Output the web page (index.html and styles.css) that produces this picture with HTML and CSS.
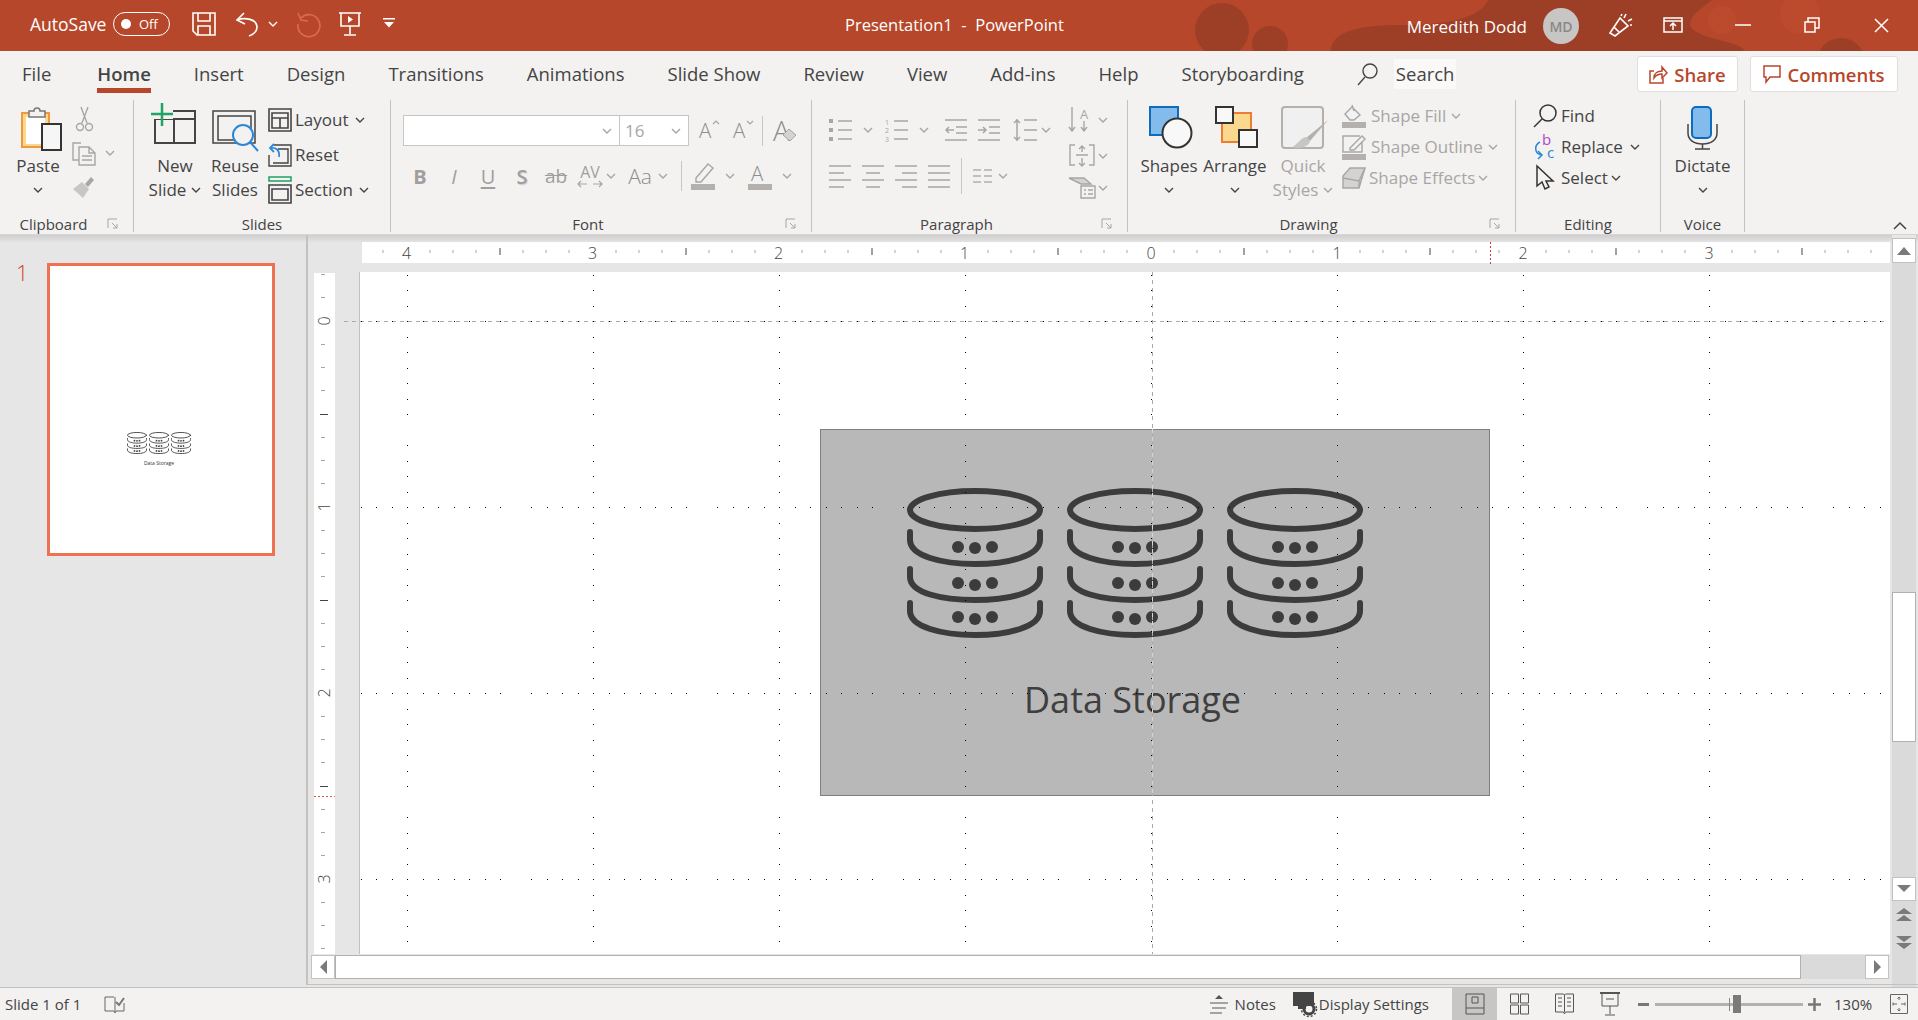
FILE: index.html
```html
<!DOCTYPE html>
<html lang="en">

<head>
    <meta charset="UTF-8">
    <title>Presentation1 - PowerPoint</title>
    <link rel="stylesheet" href="styles.css">
</head>

<body>
    <svg class="defs" width="0" height="0">
        <symbol id="cv" viewBox="0 0 10 6"><path d="M1 1l4 4 4-4" fill="none" stroke="currentColor" stroke-width="1.4"/></symbol>
        <symbol id="lc" viewBox="0 0 12 12"><path d="M1 10V1h9M5 5l5 5M10 6v4H6" fill="none" stroke="#a6a6a6"/></symbol>
        <symbol id="db" viewBox="0 0 136 150">
            <g fill="none" stroke="#3c3c3c" stroke-width="6" stroke-linecap="round">
                <ellipse cx="68" cy="22" rx="65" ry="19"/>
                <path d="M3 44v8c0 16 32 24 65 24s65-8 65-24v-8"/>
                <path d="M3 81v8c0 16 32 23 65 23s65-7 65-23v-8"/>
                <path d="M3 115v8c0 16 32 24 65 24s65-8 65-24v-8"/>
            </g>
            <g fill="#3c3c3c">
                <circle cx="51" cy="59" r="6"/><circle cx="68" cy="60" r="6"/><circle cx="85" cy="59" r="6"/>
                <circle cx="51" cy="95" r="6"/><circle cx="68" cy="97" r="6"/><circle cx="85" cy="95" r="6"/>
                <circle cx="51" cy="129" r="6"/><circle cx="68" cy="131" r="6"/><circle cx="85" cy="129" r="6"/>
            </g>
        </symbol>
    </svg>

    <div class="app">
        <header class="titlebar">
            <svg class="blobs" width="1918" height="51">
                <g fill="#9d3f27">
                    <circle cx="1222" cy="30" r="27"/><circle cx="1270" cy="44" r="18"/>
                    <path d="M1331 51c0-16 19-26 69-26 40 0 80-5 88-25h224c-12 10-22 15-22 25 5 15 50 15 55 26z"/>
                    <circle cx="1841" cy="62" r="24"/>
                </g>
                <g fill="#bc4a2c">
                    <circle cx="1722" cy="20" r="14"/><circle cx="1800" cy="14" r="20"/>
                </g>
            </svg>
            <div class="qat">
                <span class="autosave">AutoSave</span>
                <div class="pill"><i></i><span>Off</span></div>
                <svg class="q-save" width="24" height="24" viewBox="0 0 24 24" fill="none" stroke="#fff" stroke-width="1.6"><path d="M1 1h22v22H5l-4-4z"/><path d="M6 1v8h12V1M6 23v-9h12v9"/></svg>
                <svg class="q-undo" width="23" height="24" viewBox="0 0 23 24" fill="none" stroke="#fff" stroke-width="1.6"><path d="M8 1L1 8l8 4"/><path d="M1 8c8-3 20-1 20 7 0 4-3 7-8 9"/></svg>
                <svg class="cv cv-w"><use href="#cv"/></svg>
                <svg class="q-redo" width="25" height="24" viewBox="0 0 25 24" fill="none" stroke="#dd6a50" stroke-width="1.6"><path d="M4 1l3 7 7 1"/><path d="M7 6a11 11 0 1 1-3 6"/></svg>
                <svg class="q-show" width="22" height="24" viewBox="0 0 22 24" fill="none" stroke="#fff" stroke-width="1.6"><path d="M0 1h22M2 1v13h18V1M11 14v8M5 23h12"/><path d="M9 4l5 3.500-5 3.500z" fill="#fff" stroke="none"/></svg>
                <svg class="q-more" width="12" height="10" viewBox="0 0 12 10" fill="#fff"><path d="M0 0h12v1.500H0zM1 4h10L6 9.500z"/></svg>
            </div>
            <div class="doc-title">Presentation1 &nbsp;-&nbsp; PowerPoint</div>
            <div class="win">
                <span class="user">Meredith Dodd</span>
                <div class="avatar">MD</div>
                <svg class="w-party" width="24" height="24" viewBox="0 0 24 24" fill="none" stroke="#fff" stroke-width="1.600"><path d="M1 20L11 5l8 8-13 10z"/><path d="M5 14l5 5M15 5l2-4M19 8l4-2M21 12h2M12 3l1-2"/></svg>
                <svg class="w-ribbon" width="20" height="16" viewBox="0 0 20 16" fill="none" stroke="#fff" stroke-width="1.500"><path d="M1 1h18v14H1zM1 4h18M10 13V6M7 9l3-3 3 3"/></svg>
                <svg class="w-min" width="16" height="2" viewBox="0 0 16 2"><path d="M0 1h16" stroke="#fff" stroke-width="1.500"/></svg>
                <svg class="w-max" width="16" height="16" viewBox="0 0 16 16" fill="none" stroke="#fff" stroke-width="1.500"><path d="M1 5h10v10H1zM4 5V1h11v10h-4"/></svg>
                <svg class="w-close" width="15" height="15" viewBox="0 0 15 15"><path d="M1 1l13 13M14 1L1 14" stroke="#fff" stroke-width="1.500"/></svg>
            </div>
        </header>

        <nav class="tabs">
            <span class="tab t-file">File</span>
            <span class="tab active">Home</span>
            <span class="tab">Insert</span>
            <span class="tab">Design</span>
            <span class="tab">Transitions</span>
            <span class="tab">Animations</span>
            <span class="tab">Slide Show</span>
            <span class="tab">Review</span>
            <span class="tab">View</span>
            <span class="tab">Add-ins</span>
            <span class="tab">Help</span>
            <span class="tab">Storyboarding</span>
            <svg class="search-ic" width="22" height="24" viewBox="0 0 22 24" fill="none" stroke="#444" stroke-width="1.400"><circle cx="13" cy="9" r="7"/><path d="M8 15l-7 8"/></svg>
            <span class="search">Search</span>
            <div class="tab-btns">
                <div class="tbtn b-share">
                    <svg width="19" height="19" viewBox="0 0 19 19" fill="none" stroke="#b7472a" stroke-width="1.500"><path d="M5 6H1v12h13v-5"/><path d="M5 13c0-5 4-7 8-7V2l5 6-5 5V9c-3 0-6 1-8 4z"/></svg>
                    <span>Share</span>
                </div>
                <div class="tbtn b-comments">
                    <svg width="18" height="18" viewBox="0 0 18 18" fill="none" stroke="#b7472a" stroke-width="1.500"><path d="M1 1h16v11H7l-4 5v-5H1z"/></svg>
                    <span>Comments</span>
                </div>
            </div>
        </nav>

        <section class="ribbon">
            <div class="group g-clip">
                <div class="body b-clip">
                    <div class="big w48">
                        <svg class="ic" width="48" height="55" viewBox="0 0 48 55">
                            <rect x="8" y="13" width="27" height="34" fill="#fcd88e" stroke="#ee9a3c" stroke-width="2"/>
                            <rect x="12" y="17" width="19" height="27" fill="#fff"/>
                            <path d="M15 17v-6h5a3 3 0 0 1 6 0h5v6z" fill="#f3f2f1" stroke="#777" stroke-width="1.500"/>
                            <rect x="28" y="24" width="19" height="26" fill="#f6f6f6" stroke="#333" stroke-width="2"/>
                        </svg>
                        <span>Paste</span>
                        <svg class="cv cv-big"><use href="#cv"/></svg>
                    </div>
                    <div class="col col-s">
                        <div class="row">
                            <svg width="24" height="26" viewBox="0 0 24 26" fill="none" stroke="#a8a6a4" stroke-width="1.400"><path d="M9 1l6 16M16 1l-6 16"/><circle cx="8" cy="21" r="3.500"/><circle cx="17" cy="21" r="3.500"/></svg>
                        </div>
                        <div class="row">
                            <svg width="24" height="26" viewBox="0 0 24 26" fill="none" stroke="#a8a6a4" stroke-width="1.400"><path d="M9 3H1v17h6"/><path d="M7 7h10l6 6v12H7zM17 7v6h6M10 16h10M10 20h10"/></svg>
                            <svg class="cv cv-off ml4"><use href="#cv"/></svg>
                        </div>
                        <div class="row">
                            <svg width="24" height="24" viewBox="0 0 24 24"><path d="M1 14l9-7 7 7-6 9z" fill="#c8c6c4"/><path d="M13 9l6-7 3 3-6 7z" fill="#a8a6a4"/></svg>
                        </div>
                    </div>
                </div>
                <div class="label has-lc"><span>Clipboard</span><svg width="12" height="12"><use href="#lc"/></svg></div>
            </div>

            <div class="group g-slides">
                <div class="body b-slides">
                    <div class="big w58">
                        <svg class="ic" width="58" height="55" viewBox="0 0 58 55">
                            <path d="M9 11h40v32H9zM9 19h40M28 19v24" fill="none" stroke="#444" stroke-width="2"/>
                            <rect x="3" y="10" width="24" height="9" fill="#f3f2f1"/>
                            <path d="M16 3v23M5 14h22" stroke="#21a366" stroke-width="2.500"/>
                        </svg>
                        <span>New</span>
                        <span class="wcv">Slide<svg class="cv"><use href="#cv"/></svg></span>
                    </div>
                    <div class="big w56">
                        <svg class="ic" width="56" height="55" viewBox="0 0 56 55">
                            <path d="M6 43V11h42v32z" fill="none" stroke="#444" stroke-width="1.500"/>
                            <path d="M11 40V16h33v24z" fill="none" stroke="#444" stroke-width="1.500"/>
                            <circle cx="36" cy="35" r="10" fill="#f3f2f1" stroke="#2b88d8" stroke-width="2"/>
                            <path d="M43 42l8 9" stroke="#2b88d8" stroke-width="2"/>
                        </svg>
                        <span>Reuse</span>
                        <span>Slides</span>
                    </div>
                    <div class="col col-sl">
                        <div class="row">
                            <svg width="24" height="24" viewBox="0 0 24 24" fill="none" stroke="#444" stroke-width="1.600"><path d="M1 1h22v22H1zM4 5h16v15H4zM4 10h16M12 10v10"/></svg>
                            <span>Layout</span><svg class="cv"><use href="#cv"/></svg>
                        </div>
                        <div class="row">
                            <svg width="24" height="24" viewBox="0 0 24 24" fill="none" stroke="#444" stroke-width="1.400"><path d="M6 2h17v21H1V12M5 20h15V6H10"/><path d="M6 1L2 5l4 4M2 5c6-1 10 2 9 9" stroke="#2b88d8" stroke-width="1.800"/></svg>
                            <span>Reset</span>
                        </div>
                        <div class="row">
                            <svg width="24" height="28" viewBox="0 0 24 28" fill="none" stroke="#444" stroke-width="1.600"><path d="M1 1h22v4H1z" stroke="#21a366"/><path d="M1 9h22v18H1zM4 13h16v11H4z"/></svg>
                            <span>Section</span><svg class="cv"><use href="#cv"/></svg>
                        </div>
                    </div>
                </div>
                <div class="label"><span>Slides</span></div>
            </div>

            <div class="group g-font">
                <div class="body b-font">
                    <div class="f1">
                        <div class="combo c-name"><svg class="cv cv-off"><use href="#cv"/></svg></div>
                        <div class="combo c-size"><span>16</span><svg class="cv cv-off"><use href="#cv"/></svg></div>
                        <svg class="f-grow" width="21" height="34" viewBox="0 0 21 34"><text x="0" y="23.500" class="big-a">A</text><path d="M14 10l3-3 3 3" fill="none" stroke="#a6a6a6" stroke-width="1.200"/></svg>
                        <svg class="f-shr" width="21" height="34" viewBox="0 0 21 34"><text x="0" y="23.500" class="big-a">A</text><path d="M14 7l3 3 3-3" fill="none" stroke="#a6a6a6" stroke-width="1.200"/></svg>
                        <div class="vsep"></div>
                        <svg class="f-clear" width="24" height="42" viewBox="0 0 24 42"><text x="0" y="30.500" class="big-a bg">A</text><path d="M10 25l6-6 7 6-6 6z" fill="#d5d3d1" stroke="#a6a6a6"/></svg>
                    </div>
                    <div class="f2">
                        <span class="fx b">B</span>
                        <span class="fx i">I</span>
                        <span class="fx u">U</span>
                        <span class="fx s">S</span>
                        <span class="fx ab">ab</span>
                        <span class="fx av">AV<svg width="24" height="8" viewBox="0 0 24 8" fill="none" stroke="#a6a6a6" stroke-width="1.200"><path d="M0 4h9M3 1L0 4l3 3M15 4h9M21 1l3 3-3 3"/></svg></span>
                        <svg class="cv cv-off"><use href="#cv"/></svg>
                        <span class="fx aa">Aa</span>
                        <svg class="cv cv-off"><use href="#cv"/></svg>
                        <div class="vsep v2"></div>
                        <svg class="f-hl" width="24" height="28" viewBox="0 0 24 28"><path d="M5 16L17 2l5 4-12 14H5z" fill="none" stroke="#a6a6a6" stroke-width="1.400"/><path d="M0 22h24v6H0z" fill="#b3b0ad"/></svg>
                        <svg class="cv cv-off ml10"><use href="#cv"/></svg>
                        <svg class="f-col" width="24" height="28" viewBox="0 0 24 28"><text x="3" y="19" class="big-a">A</text><path d="M0 22h24v6H0z" fill="#b3b0ad"/></svg>
                        <svg class="cv cv-off ml10"><use href="#cv"/></svg>
                    </div>
                </div>
                <div class="label has-lc"><span>Font</span><svg width="12" height="12"><use href="#lc"/></svg></div>
            </div>

            <div class="group g-para">
                <div class="body b-para">
                    <div class="p-left">
                        <div class="p1">
                            <svg width="23" height="24" viewBox="0 0 23 24" fill="none" stroke="#a6a6a6" stroke-width="1.500"><path d="M0 1h4v4H0zM0 10h4v4H0zM0 19h4v4H0z" fill="#a6a6a6" stroke="none"/><path d="M9 3h14M9 12h14M9 21h14"/></svg>
                            <svg class="cv cv-off"><use href="#cv"/></svg>
                            <svg class="ml1" width="23" height="24" viewBox="0 0 23 24" fill="none" stroke="#a6a6a6" stroke-width="1.500"><path d="M9 3h14M9 12h14M9 21h14"/><text x="0" y="7" class="tiny">1</text><text x="0" y="15" class="tiny">2</text><text x="0" y="24" class="tiny">3</text></svg>
                            <svg class="cv cv-off"><use href="#cv"/></svg>
                            <svg class="ml5" width="22" height="24" viewBox="0 0 22 24" fill="none" stroke="#a6a6a6" stroke-width="1.500"><path d="M0 2h22M11 9h11M11 15h11M0 22h22M9 12H1M4 9l-3 3 3 3"/></svg>
                            <svg width="22" height="24" viewBox="0 0 22 24" fill="none" stroke="#a6a6a6" stroke-width="1.500"><path d="M0 2h22M11 9h11M11 15h11M0 22h22M0 12h8M5 9l3 3-3 3"/></svg>
                            <svg class="ml2" width="24" height="24" viewBox="0 0 24 24" fill="none" stroke="#a6a6a6" stroke-width="1.500"><path d="M11 2h13M11 12h13M11 22h13M4 1v22M1 5l3-3 3 3M1 19l3 3 3-3"/></svg>
                            <svg class="cv cv-off nm"><use href="#cv"/></svg>
                        </div>
                        <div class="p2">
                            <svg width="22" height="24" viewBox="0 0 22 24" stroke="#a6a6a6" stroke-width="1.500"><path d="M0 2h22M0 9h15M0 16h22M0 23h15"/></svg>
                            <svg width="22" height="24" viewBox="0 0 22 24" stroke="#a6a6a6" stroke-width="1.500"><path d="M0 2h22M4 9h14M0 16h22M4 23h14"/></svg>
                            <svg width="22" height="24" viewBox="0 0 22 24" stroke="#a6a6a6" stroke-width="1.500"><path d="M0 2h22M7 9h15M0 16h22M7 23h15"/></svg>
                            <svg width="22" height="24" viewBox="0 0 22 24" stroke="#a6a6a6" stroke-width="1.500"><path d="M0 2h22M0 9h22M0 16h22M0 23h22"/></svg>
                            <div class="vsep v3"></div>
                            <svg width="19" height="14" viewBox="0 0 19 14" stroke="#b3b0ad" stroke-width="1.400"><path d="M0 1h8M11 1h8M0 7h8M11 7h8M0 13h8M11 13h8"/></svg>
                            <svg class="cv cv-off nm"><use href="#cv"/></svg>
                        </div>
                    </div>
                    <div class="col col-p">
                        <div class="row r-a">
                            <svg width="26" height="26" viewBox="0 0 26 26" fill="none" stroke="#a6a6a6" stroke-width="1.400"><path d="M3 0v24M0 20l3 4 3-4M15 14v10M12 20l3 4 3-4"/><text x="11" y="12" class="tiny t2">A</text></svg>
                            <svg class="cv cv-off"><use href="#cv"/></svg>
                        </div>
                        <div class="row r-b">
                            <svg width="26" height="24" viewBox="0 0 26 24" fill="none" stroke="#a6a6a6" stroke-width="1.400"><path d="M6 1H1v20h5M20 1h5v20h-5M7 11h12M13 2v6M10 5l3-3 3 3M13 14v8M10 19l3 3 3-3"/></svg>
                            <svg class="cv cv-off"><use href="#cv"/></svg>
                        </div>
                        <div class="row r-c">
                            <svg width="26" height="22" viewBox="0 0 26 22" fill="none" stroke="#a6a6a6" stroke-width="1.400"><path d="M0 1h15l7 6H12z" fill="#d5d3d1"/><path d="M12 9h14v12H12zM15 13h2M19 13h5M15 17h2M19 17h5"/></svg>
                            <svg class="cv cv-off"><use href="#cv"/></svg>
                        </div>
                    </div>
                </div>
                <div class="label has-lc"><span>Paragraph</span><svg width="12" height="12"><use href="#lc"/></svg></div>
            </div>

            <div class="group g-draw">
                <div class="body b-draw">
                    <div class="big w66">
                        <svg class="ic" width="66" height="55" viewBox="0 0 66 55">
                            <rect x="14" y="7" width="28" height="28" fill="#83bbec" stroke="#0f6cbd" stroke-width="2"/>
                            <circle cx="41" cy="33" r="14.500" fill="#f8f8f8" stroke="#333" stroke-width="2"/>
                        </svg>
                        <span>Shapes</span>
                        <svg class="cv cv-big"><use href="#cv"/></svg>
                    </div>
                    <div class="big w66">
                        <svg class="ic" width="66" height="55" viewBox="-2 0 66 55">
                            <rect x="18" y="13" width="29" height="29" fill="#fad98f" stroke="#ed7d31" stroke-width="2"/>
                            <rect x="12" y="7" width="17" height="16" fill="#f8f8f8" stroke="#333" stroke-width="2"/>
                            <rect x="35" y="30" width="18" height="17" fill="#f8f8f8" stroke="#333" stroke-width="2"/>
                        </svg>
                        <span>Arrange</span>
                        <svg class="cv cv-big"><use href="#cv"/></svg>
                    </div>
                    <div class="big w66 dis quick">
                        <svg class="ic" width="66" height="55" viewBox="0 0 66 55">
                            <rect x="12" y="7" width="41" height="41" rx="3" fill="#f0f0f0" stroke="#b3b0ad" stroke-width="2"/>
                            <path d="M58 20L40 41l-4-3z" fill="#b3b0ad"/>
                            <path d="M37 37c-5 0-8 5-14 10 6 2 13 1 17-5z" fill="#c8c6c4"/>
                        </svg>
                        <span>Quick</span>
                        <span class="wcv">Styles<svg class="cv cv-off"><use href="#cv"/></svg></span>
                    </div>
                    <div class="col col-d dis">
                        <div class="row">
                            <svg width="24" height="24" viewBox="0 0 24 24" fill="none" stroke="#a6a6a6" stroke-width="1.400"><path d="M3 10l7-7 8 8-6 5H8zM10 1l2 6"/><path d="M0 18h24v6H0z" fill="#b3b0ad" stroke="none"/></svg>
                            <span>Shape Fill</span><svg class="cv cv-off"><use href="#cv"/></svg>
                        </div>
                        <div class="row">
                            <svg width="24" height="26" viewBox="0 0 24 26" fill="none" stroke="#a6a6a6" stroke-width="1.400"><path d="M18 2H1v16h19V8M8 14l12-12 3 3-11 11H8z"/><path d="M0 20h24v6H0z" fill="#b3b0ad" stroke="none"/></svg>
                            <span>Shape Outline</span><svg class="cv cv-off"><use href="#cv"/></svg>
                        </div>
                        <div class="row r-fx">
                            <svg width="24" height="22" viewBox="0 0 24 22" fill="#d5d3d1" stroke="#a6a6a6" stroke-width="1.400"><path d="M8 1h15l-6 20H1V9z"/><path d="M1 11l16 3 6-13M17 14v7" fill="none"/></svg>
                            <span>Shape Effects</span><svg class="cv cv-off"><use href="#cv"/></svg>
                        </div>
                    </div>
                </div>
                <div class="label has-lc"><span>Drawing</span><svg width="12" height="12"><use href="#lc"/></svg></div>
            </div>

            <div class="group g-edit">
                <div class="body b-edit">
                    <div class="col col-e">
                        <div class="row">
                            <svg width="25" height="24" viewBox="0 0 25 24" fill="none" stroke="#333" stroke-width="1.500"><circle cx="15" cy="9" r="8"/><path d="M9 15l-8 8"/></svg>
                            <span>Find</span>
                        </div>
                        <div class="row">
                            <svg width="25" height="26" viewBox="0 0 25 26"><text x="9" y="11" class="rep b1">b</text><text x="14" y="24" class="rep c1">c</text><path d="M7 8C1 11 1 20 9 21M5 17l4 4-4 4" fill="none" stroke="#2b88d8" stroke-width="1.500"/></svg>
                            <span>Replace</span><svg class="cv ml4"><use href="#cv"/></svg>
                        </div>
                        <div class="row">
                            <svg width="25" height="26" viewBox="0 0 25 26" fill="none" stroke="#333" stroke-width="1.500"><path d="M4 1v20l5-4 3 7 4-2-3-6h7z"/></svg>
                            <span>Select</span><svg class="cv"><use href="#cv"/></svg>
                        </div>
                    </div>
                </div>
                <div class="label"><span>Editing</span></div>
            </div>

            <div class="group g-voice">
                <div class="body">
                    <div class="big w83">
                        <svg class="ic" width="83" height="55" viewBox="0 0 83 55">
                            <path d="M27 24v9c0 7 6 11 14.500 11S56 40 56 33v-9M41.500 44v5M34 49h15" fill="none" stroke="#444" stroke-width="1.500"/>
                            <rect x="31" y="7" width="19" height="31" rx="4" fill="#83bbec" stroke="#0f6cbd" stroke-width="2"/>
                        </svg>
                        <span>Dictate</span>
                        <svg class="cv cv-big"><use href="#cv"/></svg>
                    </div>
                </div>
                <div class="label"><span>Voice</span></div>
            </div>

            <svg class="collapse" width="14" height="8" viewBox="0 0 14 8"><path d="M1 7l6-6 6 6" fill="none" stroke="#444" stroke-width="1.500"/></svg>
        </section>

        <main class="work">
            <aside class="thumbs">
                <span class="thumb-no">1</span>
                <div class="thumb">
                    <div class="thumb-icons">
                        <svg width="20" height="22"><use href="#db"/></svg>
                        <svg width="20" height="22"><use href="#db"/></svg>
                        <svg width="20" height="22"><use href="#db"/></svg>
                    </div>
                    <span class="thumb-text">Data Storage</span>
                </div>
            </aside>

            <div class="edit">
                <svg class="hruler" width="1528" height="21" viewBox="0 0 1528 21">
                    <defs>
                        <pattern id="ht" x="44.500" y="0" width="186" height="21" patternUnits="userSpaceOnUse">
                            <path d="M23.250 8v3M46.500 8v3M69.750 8v3M116.250 8v3M139.500 8v3M162.750 8v3" stroke="#a6a6a6" shape-rendering="crispEdges"/>
                            <path d="M93 6v7" stroke="#444" shape-rendering="crispEdges"/>
                        </pattern>
                    </defs>
                    <rect width="1528" height="21" fill="url(#ht)"/>
                    <g class="rnum" text-anchor="middle">
                        <text x="44.500" y="17">4</text><text x="230.500" y="17">3</text><text x="416.500" y="17">2</text><text x="602.500" y="17">1</text>
                        <text x="789" y="17">0</text><text x="975" y="17">1</text><text x="1161" y="17">2</text><text x="1347" y="17">3</text>
                    </g>
                    <path d="M1128.500 0v23" stroke="#d13438" stroke-dasharray="2 2"/>
                </svg>

                <svg class="vruler" width="21" height="681" viewBox="0 0 21 681">
                    <defs>
                        <pattern id="vt" x="0" y="48" width="21" height="186" patternUnits="userSpaceOnUse">
                            <path d="M7 23.250h4M7 46.500h4M7 69.750h4M7 116.250h4M7 139.500h4M7 162.750h4" stroke="#a6a6a6" shape-rendering="crispEdges"/>
                            <path d="M6 93h8" stroke="#444" shape-rendering="crispEdges"/>
                        </pattern>
                    </defs>
                    <rect width="21" height="681" fill="url(#vt)"/>
                    <g class="rnum" text-anchor="middle">
                        <text transform="translate(16 48) rotate(-90)">0</text>
                        <text transform="translate(16 234) rotate(-90)">1</text>
                        <text transform="translate(16 420) rotate(-90)">2</text>
                        <text transform="translate(16 606) rotate(-90)">3</text>
                    </g>
                    <path d="M0 523.500h21" stroke="#e8573a" stroke-dasharray="2 2"/>
                </svg>

                <div class="canvas">
                    <div class="slide">
                        <div class="slide-icons">
                            <svg width="136" height="150"><use href="#db"/></svg>
                            <svg width="136" height="150"><use href="#db"/></svg>
                            <svg width="136" height="150"><use href="#db"/></svg>
                        </div>
                        <div class="slide-text">Data Storage</div>
                    </div>
                    <svg class="gridlines" width="1530" height="682" viewBox="0 0 1530 682">
                        <defs>
                            <pattern id="gd" x="47" y="49" width="186" height="186" patternUnits="userSpaceOnUse">
                                <path d="M.5 0v186M0 .5h186" fill="none" stroke="#000" stroke-dasharray="1 14.500" shape-rendering="crispEdges"/>
                            </pattern>
                        </defs>
                        <path d="M-16 49.500H1528" stroke="#aaa" stroke-dasharray="4 4"/>
                        <path d="M792.500 0V682" stroke="#aaa" stroke-dasharray="4 4"/>
                        <path d="M792.500 157V524" stroke="#d6d6d6" stroke-dasharray="4 4"/>
                        <rect width="1530" height="682" fill="url(#gd)"/>
                    </svg>
                </div>

                <div class="vscroll">
                    <div class="sbtn sb-up"><svg width="14" height="8" viewBox="0 0 14 8"><path d="M0 8l7-8 7 8z" fill="#7a7a7a"/></svg></div>
                    <div class="v-track"><div class="v-thumb"></div></div>
                    <div class="sbtn sb-down"><svg width="14" height="8" viewBox="0 0 14 8"><path d="M0 0l7 7 7-7z" fill="#7a7a7a"/></svg></div>
                    <svg class="pg" width="16" height="14" viewBox="0 0 16 14" fill="#7a7a7a"><path d="M0 6l8-6 8 6zM0 13l8-6 8 6z"/></svg>
                    <svg class="pg" width="16" height="14" viewBox="0 0 16 14" fill="#7a7a7a"><path d="M0 1h16L8 7zM0 8h16L8 14z"/></svg>
                </div>

                <div class="hscroll">
                    <div class="sbtn sb-left"><svg width="7" height="14" viewBox="0 0 7 14"><path d="M7 0L0 7l7 7z" fill="#7a7a7a"/></svg></div>
                    <div class="h-thumb"></div>
                    <div class="h-track"></div>
                    <div class="sbtn sb-right"><svg width="7" height="14" viewBox="0 0 7 14"><path d="M0 0l7 7-7 7z" fill="#7a7a7a"/></svg></div>
                </div>
                <div class="edit-line"></div>
            </div>
        </main>

        <footer class="status">
            <span class="st-slide">Slide 1 of 1</span>
            <svg class="st-spell" width="21" height="20" viewBox="0 0 21 20" fill="none" stroke="#666"><path d="M10 3H1v14h9l1 2 1-2h8V9M11 3v14"/><path d="M12 8l3 3 5-7" stroke-width="2" stroke="#777"/></svg>
            <div class="st-right">
                <svg width="18" height="20" viewBox="0 0 18 20" fill="none" stroke="#555"><path d="M0 9h18M2 14h14M0 19h12"/><path d="M5 5l4-4 4 4z" fill="#555" stroke="none"/></svg>
                <span class="st-notes">Notes</span>
                <svg class="st-disp" width="23" height="24" viewBox="0 0 23 24"><path d="M0 0h21v14H13v3H5v-3H0z" fill="#444"/><circle cx="16" cy="17" r="5" fill="none" stroke="#444" stroke-width="3"/><circle cx="16" cy="17" r="7.500" fill="none" stroke="#444" stroke-width="1.500" stroke-dasharray="2 2"/></svg>
                <span class="st-dset">Display Settings</span>
                <div class="st-view active">
                    <svg width="20" height="22" viewBox="0 0 20 22" fill="none" stroke="#555"><path d="M1 1h18v20H1zM1 15h18M7 4h6v6H7z"/></svg>
                </div>
                <div class="st-view">
                    <svg width="19" height="22" viewBox="0 0 19 22" fill="none" stroke="#555"><path d="M.5 1h8v9h-8zM10.500 1h8v9h-8zM.5 12h8v9h-8zM10.500 12h8v9h-8z"/></svg>
                </div>
                <div class="st-view">
                    <svg width="19" height="22" viewBox="0 0 19 22" fill="none" stroke="#555"><path d="M.5 1h8l1 1 1-1h8v18h-8l-1 2-1-2h-8zM9.500 2v17M3 5h4M3 9h4M3 13h4M12 5h4M12 9h4M12 13h4"/></svg>
                </div>
                <div class="st-view">
                    <svg width="20" height="24" viewBox="0 0 20 24" fill="none" stroke="#555"><path d="M0 1h20" stroke-width="2"/><path d="M2 2v12h16V2M10 14v8M5 23h10M6 7h8"/></svg>
                </div>
                <svg class="z-minus" width="11" height="3"><rect width="11" height="3" fill="#777"/></svg>
                <div class="z-slider"><i class="z-tick"></i><i class="z-knob"></i></div>
                <svg class="z-plus" width="13" height="13" viewBox="0 0 13 13"><path d="M0 6.500h13M6.500 0v13" stroke="#777" stroke-width="2.500"/></svg>
                <span class="z-val">130%</span>
                <svg class="z-fit" width="18" height="20" viewBox="0 0 18 20" fill="none" stroke="#666"><path d="M.5.500h17v19H.5zM3 10h4M15 10h-4M9 3v3M9 17v-3M3 8.500v3M15 8.500v3M7.500 4.500L9 3l1.500 1.500M7.500 15.500L9 17l1.500-1.500"/></svg>
            </div>
        </footer>
    </div>
</body>

</html>
```

FILE: styles.css
```css
* {
    box-sizing: border-box;
}

html, body {
    margin: 0;
    height: 100%;
    overflow: hidden;
}

body {
    font-family: "Open Sans", "Noto Sans", sans-serif;
    color: #444;
    background: #f3f2f1;
}

svg {
    display: block;
    flex: none;
    overflow: visible;
}

.defs {
    position: absolute;
}

.app {
    display: flex;
    flex-direction: column;
    height: 1020px;
}

.cv {
    width: 10px;
    height: 6px;
    color: #444;
}

.cv-off {
    color: #a6a6a6;
}

.cv-w {
    color: #fff;
    margin: 0 0 0 9px;
}

.ml1 { margin-left: 1px; }
.ml2 { margin-left: 2px; }
.ml4 { margin-left: 4px; }
.ml5 { margin-left: 5px; }
.ml10 { margin-left: 10px; }

/* title bar */
.titlebar {
    position: relative;
    height: 51px;
    flex: none;
    background: #b7472a;
    color: #fff;
    display: grid;
    grid-template-columns: 845px 1fr auto;
    align-items: center;
    overflow: hidden;
}

.blobs {
    position: absolute;
    left: 0;
    top: 0;
}

.qat, .doc-title, .win {
    position: relative;
    display: flex;
    align-items: center;
}

.qat {
    padding-left: 30px;
    margin-top: -3px;
}

.autosave {
    font-size: 17.500px;
    width: 83px;
}

.pill {
    width: 57px;
    height: 24px;
    border: 1.5px solid #fff;
    border-radius: 12px;
    display: flex;
    align-items: center;
    padding-left: 7px;
    font-size: 13px;
}

.pill i {
    width: 10px;
    height: 10px;
    border-radius: 50%;
    background: #fff;
    margin-right: 8px;
}

.q-save { margin-left: 22px; }
.q-undo { margin-left: 20px; }
.q-redo { margin-left: 16px; }
.q-show { margin-left: 20px; }
.q-more { margin-left: 22px; margin-top: -2px; }

.doc-title {
    font-size: 16.500px;
    margin-top: -3px;
}

.win {
    padding-right: 29px;
    margin-top: 1px;
}

.user {
    font-size: 17px;
    margin-right: 16px;
}

.avatar {
    width: 36px;
    height: 36px;
    border-radius: 50%;
    background: #c8c6c4;
    color: #8a8886;
    font-size: 14px;
    font-weight: 600;
    display: flex;
    align-items: center;
    justify-content: center;
    margin-right: 30px;
}

.win svg { margin-top: -2px; }
.w-ribbon { margin-left: 30px; }
.w-min { margin-left: 52px; }
.w-max { margin-left: 53px; }
.w-close { margin-left: 54px; }

/* tabs */
.tabs {
    height: 46px;
    flex: none;
    display: flex;
    align-items: center;
    gap: 43px;
    padding-left: 22px;
    font-size: 18.500px;
    color: #444;
}

.tab {
    line-height: 46px;
    height: 46px;
    position: relative;
}

.t-file {
    margin-right: 3px;
}

.tab.active {
    font-weight: 600;
}

.tab.active::after {
    content: "";
    position: absolute;
    left: 0;
    right: 0;
    top: 37px;
    height: 5px;
    background: #b7472a;
}

.search-ic {
    margin-left: 10px;
}

.search {
    margin-left: -28px;
    background: #faf9f8;
    padding: 2px 2px;
    line-height: 26px;
}

.tab-btns {
    margin-left: auto;
    padding-right: 20px;
    display: flex;
    gap: 12px;
}

.tbtn {
    height: 36px;
    background: #fff;
    border: 1px solid #e1dfdd;
    border-radius: 3px;
    display: flex;
    align-items: center;
    justify-content: center;
    gap: 6px;
    color: #b7472a;
    font-weight: 600;
    font-size: 18.500px;
}

.b-share { width: 101px; }
.b-comments { width: 148px; }

/* ribbon */
.ribbon {
    height: 138px;
    flex: none;
    display: flex;
    padding-top: 3px;
    padding-bottom: 3px;
    font-size: 17px;
    color: #444;
    border-bottom: 1px solid #d8d6d4;
}

.group {
    display: flex;
    flex-direction: column;
    border-right: 1px solid #c4c2c0;
    height: 132px;
}

.g-clip { width: 134px; }
.g-slides { width: 257px; }
.g-font { width: 421px; }
.g-para { width: 316px; }
.g-draw { width: 388px; }
.g-edit { width: 145px; }
.g-voice { width: 84px; }

.body {
    height: 114px;
    display: flex;
}

.label {
    height: 18px;
    line-height: 20px;
    text-align: center;
    font-size: 15px;
    display: grid;
}

.has-lc {
    grid-template-columns: 1fr 26px;
    align-items: center;
}

.big {
    display: flex;
    flex-direction: column;
    align-items: center;
}

.big .ic {
    margin-bottom: -1px;
}

.big span {
    line-height: 24px;
    height: 24px;
    white-space: nowrap;
}

.cv-big {
    margin-top: 9px;
}

.wcv {
    display: flex;
    align-items: center;
    gap: 5px;
}

.w48 { width: 48px; }
.w56 { width: 56px; }
.w58 { width: 58px; }
.w66 { width: 66px; }
.w83 { width: 83px; }

.dis {
    color: #a8a6a4;
}

.col {
    display: flex;
    flex-direction: column;
}

.row {
    display: flex;
    align-items: center;
    gap: 5px;
    white-space: nowrap;
}

.b-clip { padding-left: 14px; }

.col-s {
    margin-left: 10px;
    padding-top: 2px;
}

.col-s .row { height: 34px; }

.b-slides {
    padding-left: 12px;
    gap: 3px;
}

.col-sl {
    margin-left: 2px;
    padding-top: 2px;
}

.col-sl .row {
    height: 35px;
    gap: 3px;
}

.col-sl .cv {
    margin-left: 3px;
}

/* font group */
.b-font {
    flex-direction: column;
    padding-left: 12px;
}

.f1 {
    display: flex;
    align-items: center;
    margin-top: 15px;
    height: 31px;
}

.combo {
    height: 31px;
    background: #fff;
    border: 1px solid #c8c6c4;
    display: flex;
    align-items: center;
    justify-content: flex-end;
    padding-right: 7px;
}

.c-name { width: 217px; }

.c-size {
    width: 70px;
    margin-left: -1px;
    justify-content: space-between;
    padding-left: 5px;
    color: #a6a6a6;
    font-size: 17px;
}

.f-grow { margin-left: 10px; }
.f-shr { margin-left: 13px; }

.big-a {
    font-size: 20.500px;
    font-weight: 300;
    fill: #8f8d8b;
}

.big-a.bg {
    font-size: 28px;
}

.vsep {
    width: 1px;
    height: 30px;
    background: #c8c6c4;
    margin-left: 8px;
}

.f-clear { margin-left: 10px; }

.f2 {
    display: flex;
    align-items: center;
    margin-top: 15px;
    height: 30px;
}

.fx {
    width: 34px;
    text-align: center;
    font-size: 20px;
    color: #a19f9d;
    flex: none;
}

.fx.b { font-weight: 700; }
.fx.i { font-style: italic; }
.fx.u { text-decoration: underline; text-underline-offset: 3px; }
.fx.s { font-weight: 600; text-shadow: 1px 1px 1px #ccc; }
.fx.ab { text-decoration: line-through; font-size: 19px; }

.fx.av {
    font-size: 16px;
    line-height: 15px;
    display: flex;
    flex-direction: column;
    align-items: center;
    margin-right: -1px;
}

.fx.aa {
    width: 36px;
    margin-left: 6px;
    font-size: 21px;
    font-weight: 300;
    color: #8f8d8b;
}

.vsep.v2 { margin-left: 13px; margin-right: 9px; }
.f-col { margin-left: 13px; }

/* paragraph group */
.b-para {
    padding-left: 17px;
}

.p-left {
    width: 240px;
}

.p1, .p2 {
    display: flex;
    align-items: center;
    gap: 11px;
}

.p1 {
    margin-top: 18px;
}

.p2 {
    margin-top: 16px;
}

.nm {
    margin-left: -7px;
}

.p2 .nm { margin-left: -5px; }

.vsep.v3 {
    height: 36px;
    margin: 0;
}

.tiny {
    font-size: 7px;
    fill: #a6a6a6;
    stroke: none;
}

.t2 {
    font-size: 13px;
}

.col-p {
    padding-top: 7px;
}

.col-p .row { gap: 3px; }
.r-a { height: 26px; }
.r-b { margin-top: 11px; height: 24px; }
.r-c { margin-top: 9px; height: 22px; }

/* drawing group */
.b-draw {
    padding-left: 8px;
}

.quick {
    margin-left: 2px;
}

.col-d {
    margin-left: 6px;
}

.col-d .row { height: 31px; }
.r-fx { gap: 3px; }

/* editing and voice */
.col-e {
    padding-left: 17px;
}

.col-e .row {
    height: 31px;
    gap: 3px;
}

.rep {
    font-size: 15px;
}

.b1 { fill: #b146c2; }
.c1 { fill: #2b88d8; }

.collapse {
    margin-left: auto;
    margin-right: 11px;
    align-self: flex-end;
    margin-bottom: 1px;
}

/* main area */
.work {
    flex: 1;
    min-height: 0;
    display: flex;
    background: linear-gradient(#cfcfcf, #e6e6e6 8px) #e6e6e6;
}

.thumbs {
    width: 308px;
    flex: none;
    border-right: 2px solid #c4c2c0;
    margin-bottom: 2px;
    display: flex;
    align-items: flex-start;
    padding: 28px 0 0 16px;
}

.thumb-no {
    width: 31px;
    margin-top: -3px;
    color: #d24726;
    font-size: 22px;
    font-weight: 300;
    line-height: 24px;
}

.thumb {
    width: 228px;
    height: 293px;
    border: 3px solid #ef7152;
    background: #fff;
    display: flex;
    flex-direction: column;
    align-items: center;
    padding: 166px 4px 0 0;
}

.thumb-icons {
    display: flex;
    gap: 2px;
}

.thumb-text {
    font-size: 5px;
    line-height: 8px;
    margin-top: 5px;
    color: #333;
}

.edit {
    flex: 1;
    display: grid;
    grid-template-columns: 6px 21px 25px 1530px 2px 24px 2px;
    grid-template-rows: 7px 21px 9px 682px 1px 24px 8px;
}

.hruler {
    grid-column: 4;
    grid-row: 2;
    margin-left: 2px;
    background: #fff;
}

.rnum {
    font-size: 16px;
    font-weight: 300;
    fill: #444;
}

.vruler {
    grid-column: 2;
    grid-row: 4;
    margin-top: 1px;
    background: #fff;
}

.canvas {
    grid-column: 4;
    grid-row: 4;
    position: relative;
    background: #fff;
    box-shadow: -1px 0 0 #c4c2c0;
}

.slide {
    position: absolute;
    left: 460px;
    top: 157px;
    width: 670px;
    height: 367px;
    background: #b8b8b8;
    border: 1px solid #7f7f7f;
    display: flex;
    flex-direction: column;
    align-items: flex-start;
    padding: 58px 0 0 86px;
}

.slide-icons {
    display: flex;
    gap: 24px;
}

.slide-text {
    font-size: 36px;
    line-height: 46px;
    color: #3f3f3f;
    margin: 39px 0 0 117px;
    white-space: nowrap;
}

.gridlines {
    position: absolute;
    left: 0;
    top: 0;
}

.vscroll {
    grid-column: 6;
    grid-row: 1 / 8;
    display: flex;
    flex-direction: column;
    align-items: stretch;
    padding-top: 3px;
    background: linear-gradient(#e6e6e6 20px, #dadada 20px);
}

.sbtn {
    background: #fff;
    border: 1px solid #c4c2c0;
    display: flex;
    align-items: center;
    justify-content: center;
    flex: none;
}

.sb-up { height: 25px; }
.sb-down { height: 24px; }

.v-track {
    height: 614px;
    padding-top: 329px;
}

.v-thumb {
    height: 150px;
    background: #fff;
    border: 1px solid #b3b0ad;
}

.pg {
    margin: 13px auto 0;
}

.sb-down + .pg {
    margin-top: 7px;
}

.hscroll {
    grid-column: 1 / 5;
    grid-row: 6;
    display: flex;
    padding-left: 3px;
}

.hscroll .sbtn {
    width: 24px;
    border-width: 1px;
}

.h-thumb {
    width: 1466px;
    background: #fff;
    border: 1px solid #b3b0ad;
}

.h-track {
    width: 64px;
    background: #dadada;
}

.edit-line {
    grid-column: 1 / 8;
    grid-row: 7;
    height: 1px;
    margin-top: 5px;
    background: #c4c2c0;
}

/* status bar */
.status {
    height: 33px;
    flex: none;
    border-top: 1px solid #c4c2c0;
    display: flex;
    align-items: center;
    font-size: 15px;
    color: #444;
    padding-left: 5px;
}

.st-slide {
    width: 99px;
}

.st-right {
    margin-left: auto;
    display: flex;
    align-items: center;
    height: 100%;
    padding-right: 10px;
}

.st-notes { margin-left: 7px; }
.st-disp { margin-left: 17px; }
.st-dset { margin-left: 3px; margin-right: 23px; }

.st-view {
    width: 45px;
    height: 100%;
    display: flex;
    align-items: center;
    justify-content: center;
}

.st-view.active {
    background: #c8c6c4;
}

.z-minus { margin-left: 6px; }

.z-slider {
    position: relative;
    width: 148px;
    height: 3px;
    margin-left: 6px;
    background: #b3b0ad;
}

.z-tick {
    position: absolute;
    left: 74px;
    top: -5px;
    width: 1px;
    height: 13px;
    background: #8a8886;
}

.z-knob {
    position: absolute;
    left: 78px;
    top: -8px;
    width: 8px;
    height: 18px;
    background: #7a7a7a;
}

.z-plus { margin-left: 5px; }

.z-val {
    margin-left: 13px;
    width: 56px;
}
```
